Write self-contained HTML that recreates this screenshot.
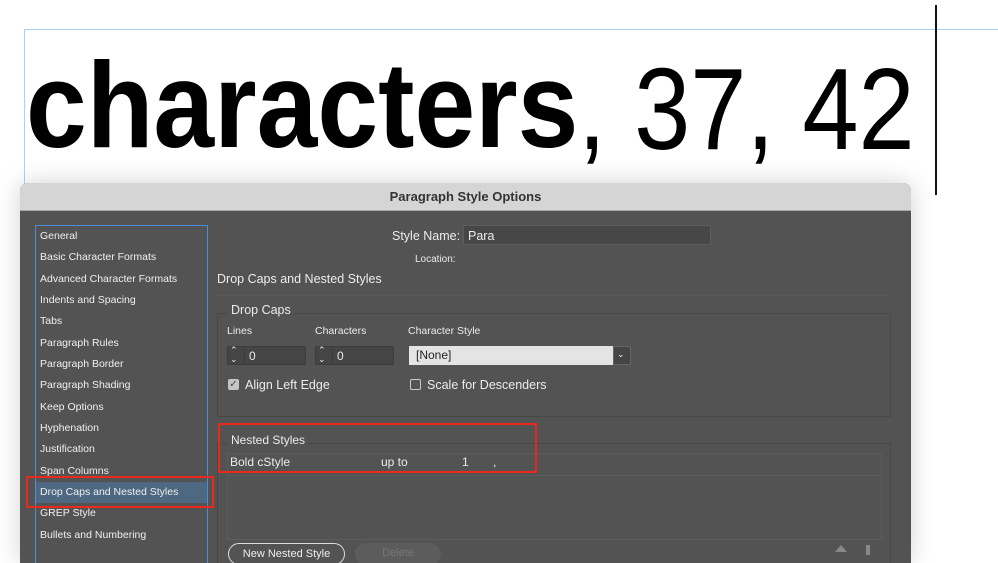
<!DOCTYPE html>
<html><head><meta charset="utf-8"><style>
*{margin:0;padding:0;box-sizing:border-box}
body{width:998px;height:552px;overflow:hidden;background:#fff;position:relative;font-family:"Liberation Sans",sans-serif}
.a{position:absolute}
.big{position:absolute;top:0;white-space:nowrap;transform-origin:0 0;color:#000;line-height:1}
.dlg{position:absolute;left:20px;top:183px;width:891px;height:380px;border-radius:8px 8px 0 0;box-shadow:0 0 24px rgba(0,0,0,.18);overflow:hidden;background:#535353}
.tb{position:absolute;left:0;top:0;width:100%;height:28px;background:#d5d5d5;border-bottom:1px solid #a8a8a8;text-align:center;font-weight:bold;font-size:13px;line-height:27px;color:#333}
.t{position:absolute;color:#ececec;font-size:11px;white-space:nowrap;line-height:13px}
.list{position:absolute;left:15px;top:42px;width:173px;height:340px;border:1px solid #4a8fd6}
.list div{height:21.35px;line-height:21px;padding-left:4px;font-size:10.5px;color:#f0f0f0}
.sel{background:#4d6880}
.red{position:absolute;border:2px solid #e8291c}
.grp{position:absolute;border:1px solid #484848}
.inp{position:absolute;background:#454545;border:1px solid #3c3c3c;border-radius:2px}
</style></head><body>
<div class="a" style="left:24px;top:29px;width:974px;height:1px;background:#a9d3f5"></div>
<div class="a" style="left:24px;top:29px;width:1px;height:160px;background:#a9d3f5"></div>
<div class="big" style="left:26px;top:44px;font-size:122px;font-weight:bold;transform:scaleX(.895)">characters</div>
<div class="big" style="left:578px;top:51px;font-size:116px;font-weight:normal;transform:scaleX(.87)">, 37, 42</div>
<div class="a" style="left:935px;top:5px;width:1.5px;height:190px;background:#111"></div>
<div class="dlg">
<div class="tb">Paragraph Style Options</div>
<div class="list">
<div>General</div><div>Basic Character Formats</div><div>Advanced Character Formats</div><div>Indents and Spacing</div><div>Tabs</div><div>Paragraph Rules</div><div>Paragraph Border</div><div>Paragraph Shading</div><div>Keep Options</div><div>Hyphenation</div><div>Justification</div><div>Span Columns</div><div class="sel">Drop Caps and Nested Styles</div><div>GREP Style</div><div>Bullets and Numbering</div>
</div>
<div class="red" style="left:6px;top:293px;width:188px;height:32px"></div>
<div class="t" style="left:372px;top:47px;font-size:12.5px">Style Name:</div>
<div class="inp" style="left:443px;top:42px;width:248px;height:20px;background:#474747;border-color:#5e5e5e"></div>
<div class="t" style="left:448px;top:47px;font-size:12.5px">Para</div>
<div class="t" style="left:395px;top:70px;font-size:10px">Location:</div>
<div class="t" style="left:197px;top:90px;font-size:12.5px">Drop Caps and Nested Styles</div>
<div class="a" style="left:197px;top:112px;width:673px;height:1px;background:#5a5a5a"></div>
<div class="grp" style="left:197px;top:130px;width:674px;height:104px"></div>
<div class="t" style="left:208px;top:121px;font-size:12.5px;background:#535353;padding:0 3px">Drop Caps</div>
<div class="t" style="left:207px;top:142px;font-size:10.5px">Lines</div>
<div class="t" style="left:295px;top:142px;font-size:10.5px">Characters</div>
<div class="t" style="left:388px;top:142px;font-size:10.5px">Character Style</div>
<div class="inp" style="left:207px;top:163px;width:79px;height:19px"></div>
<div class="a" style="left:224px;top:164px;width:1px;height:17px;background:#3c3c3c"></div>
<div class="t" style="left:210px;top:163px;font-size:9px;line-height:9px">&#8963;<br>&#8964;</div>
<div class="t" style="left:229px;top:167px;font-size:12px">0</div>
<div class="inp" style="left:295px;top:163px;width:79px;height:19px"></div>
<div class="a" style="left:312px;top:164px;width:1px;height:17px;background:#3c3c3c"></div>
<div class="t" style="left:298px;top:163px;font-size:9px;line-height:9px">&#8963;<br>&#8964;</div>
<div class="t" style="left:317px;top:167px;font-size:12px">0</div>
<div class="a" style="left:389px;top:163px;width:204px;height:19px;background:#e4e4e4"></div>
<div class="t" style="left:396px;top:166px;font-size:12px;color:#222">[None]</div>
<div class="inp" style="left:593px;top:163px;width:18px;height:19px;border-color:#666"></div>
<div class="t" style="left:597px;top:165px;font-size:9px">&#8964;</div>
<div class="a" style="left:208px;top:196px;width:11px;height:11px;background:#c4c4c4;border-radius:2px;color:#444;font-size:10px;line-height:11px;text-align:center">✓</div>
<div class="t" style="left:225px;top:196px;font-size:12.5px">Align Left Edge</div>
<div class="a" style="left:390px;top:196px;width:11px;height:11px;border:1px solid #ccc;border-radius:2px"></div>
<div class="t" style="left:407px;top:196px;font-size:12.5px">Scale for Descenders</div>
<div class="grp" style="left:197px;top:260px;width:674px;height:130px"></div>
<div class="t" style="left:208px;top:251px;font-size:12px;background:#535353;padding:0 3px">Nested Styles</div>
<div class="a" style="left:207px;top:270px;width:655px;height:87px;border:1px solid #5c5c5c"></div>
<div class="a" style="left:207px;top:292px;width:655px;height:1px;background:#5c5c5c"></div>
<div class="t" style="left:210px;top:273px;font-size:12px">Bold cStyle</div>
<div class="t" style="left:361px;top:273px;font-size:12px">up to</div>
<div class="t" style="left:442px;top:273px;font-size:12px">1</div>
<div class="t" style="left:473px;top:273px;font-size:12px">,</div>
<div class="red" style="left:198px;top:240px;width:319px;height:50px"></div>
<div class="a" style="left:208px;top:360px;width:117px;height:22px;border:1px solid #ddd;border-radius:11px;color:#eee;font-size:11px;text-align:center;line-height:20px">New Nested Style</div>
<div class="a" style="left:335px;top:360px;width:86px;height:22px;background:#5c5c5c;border-radius:11px;color:#777;font-size:11px;text-align:center;line-height:20px">Delete</div>
<div class="a" style="left:815px;top:362px;width:0;height:0;border-left:6px solid transparent;border-right:6px solid transparent;border-bottom:7px solid #888"></div>
<div class="a" style="left:846px;top:362px;width:4px;height:10px;background:#888"></div>
</div>
</body></html>
